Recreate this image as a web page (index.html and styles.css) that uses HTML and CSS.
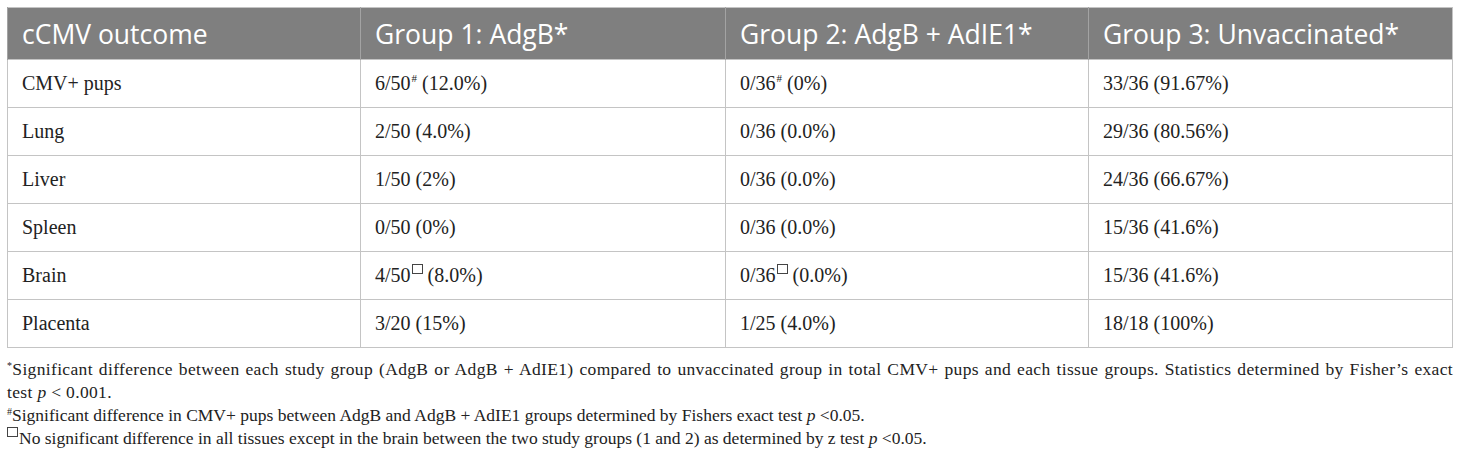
FILE: index.html
```html
<!DOCTYPE html>
<html lang="en">
<head>
<meta charset="utf-8">
<title>cCMV outcome table</title>
<link rel="stylesheet" href="styles.css">
</head>
<body>
<div class="wrap">
  <table class="data">
    <thead>
      <tr>
        <th>cCMV outcome</th>
        <th>Group 1: AdgB*</th>
        <th>Group 2: AdgB + AdIE1*</th>
        <th>Group 3: Unvaccinated*</th>
      </tr>
    </thead>
    <tbody>
      <tr><td>CMV+ pups</td><td>6/50<sup class="hash">#</sup> (12.0%)</td><td>0/36<sup class="hash">#</sup> (0%)</td><td>33/36 (91.67%)</td></tr>
      <tr><td>Lung</td><td>2/50 (4.0%)</td><td>0/36 (0.0%)</td><td>29/36 (80.56%)</td></tr>
      <tr><td>Liver</td><td>1/50 (2%)</td><td>0/36 (0.0%)</td><td>24/36 (66.67%)</td></tr>
      <tr><td>Spleen</td><td>0/50 (0%)</td><td>0/36 (0.0%)</td><td>15/36 (41.6%)</td></tr>
      <tr><td>Brain</td><td>4/50<span class="box"></span> (8.0%)</td><td>0/36<span class="box"></span> (0.0%)</td><td>15/36 (41.6%)</td></tr>
      <tr><td>Placenta</td><td>3/20 (15%)</td><td>1/25 (4.0%)</td><td>18/18 (100%)</td></tr>
    </tbody>
  </table>
  <div class="notes">
    <p class="wide"><sup class="fn">*</sup>Significant difference between each study group (AdgB or AdgB + AdIE1) compared to unvaccinated group in total CMV+ pups and each tissue groups. Statistics determined by Fisher’s exact <span class="keep">test <i>p</i> &lt; 0.001.</span></p>
    <p><sup class="fn">#</sup>Significant difference in CMV+ pups between AdgB and AdgB + AdIE1 groups determined by Fishers exact test <i>p</i> &lt;0.05.</p>
    <p><span class="box fnbox"></span>No significant difference in all tissues except in the brain between the two study groups (1 and 2) as determined by z test <i>p</i> &lt;0.05.</p>
  </div>
</div>
</body>
</html>
```

FILE: styles.css
```css
html, body {
  margin: 0;
  padding: 0;
  background: #ffffff;
}

.wrap {
  padding: 7px 7px 0 7px;
}

.data {
  width: 1446px;
  border-collapse: collapse;
  table-layout: fixed;
  border: 1px solid #c4c4c4;
}

.data th {
  background: #7f7f7f;
  color: #ffffff;
  font-family: "Open Sans", "Noto Sans", sans-serif;
  font-weight: 400;
  font-size: 26.5px;
  text-align: left;
  height: 52px;
  padding: 0 14px;
  border-left: 1px solid #a3a3a3;
  box-sizing: border-box;
  white-space: nowrap;
}

.data th:first-child { width: 353px; }
.data th:nth-child(2) { width: 365px; }
.data th:nth-child(3) { width: 363px; }

.data td {
  font-family: "Liberation Serif", "Times New Roman", serif;
  font-size: 20px;
  color: #222222;
  height: 48px;
  padding: 0 14px;
  border: 1px solid #c4c4c4;
  box-sizing: border-box;
  vertical-align: middle;
}

.hash {
  font-size: 11px;
  vertical-align: 8px;
  line-height: 0;
  margin-left: 1px;
}

.box {
  display: inline-block;
  width: 11px;
  height: 10px;
  border: 1px solid #444;
  vertical-align: 8px;
  margin-left: 1px;
  box-sizing: border-box;
}

.notes {
  margin-top: 10px;
  font-family: "Liberation Serif", "Times New Roman", serif;
  font-size: 17.5px;
  line-height: 23px;
  color: #222222;
  width: 1446px;
  text-align: justify;
}

.notes p {
  margin: 0;
}

.notes .wide {
  letter-spacing: 0.34px;
}

.keep {
  white-space: nowrap;
}

.fn {
  font-size: 10px;
  vertical-align: 6px;
  line-height: 0;
}

.fnbox {
  vertical-align: 7px;
  margin-left: 0;
  margin-right: 1px;
}
```
